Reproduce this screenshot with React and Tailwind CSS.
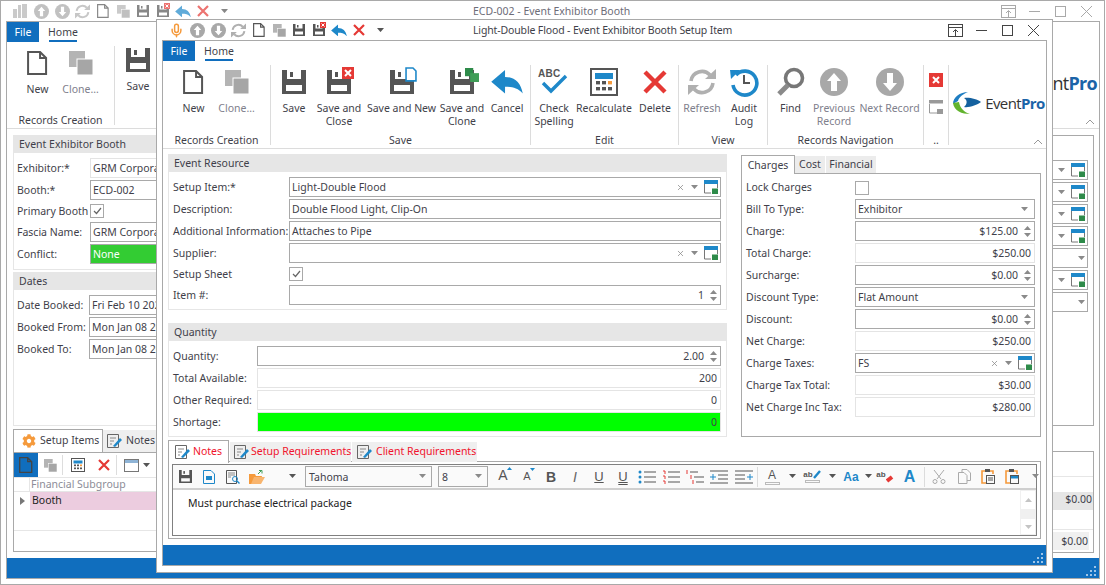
import React from "react";
import { Mic, X as XI } from "lucide-react";
import { FaCog } from "react-icons/fa";

const D = "#555555", B = "#1e88c9", R = "#e53935";

const Page = ({ s = 24, c = D }) => (
  <svg width={s * 0.84} height={s} viewBox="0 0 20 24"><path d="M1 1H13L19 7V23H1Z M13 1V7H19" fill="none" stroke={c} strokeWidth="2" /></svg>
);
const Clone = ({ s = 24 }) => (
  <svg width={s} height={s} viewBox="0 0 24 24"><rect x="0" y="0" width="16" height="16" fill="#b4b4b4" /><rect x="8" y="8" width="16" height="16" fill="#a6a6a6" stroke="#fff" strokeWidth="1" /></svg>
);
const Floppy = ({ s = 24 }) => (
  <svg width={s} height={s} viewBox="0 0 24 24"><path fillRule="evenodd" d="M0 0H24V24H0Z M5 0V9H19V0Z M4 15V21H20V15Z" fill={D} /><rect x="8" y="2" width="3" height="5" fill={D} /></svg>
);
const Badge = ({ s, kind }) => (
  <span className="relative inline-block">
    <Floppy s={s} />
    {kind === "x" && (
      <svg className="absolute left-[62%] top-[-14%]" width={s * 0.5} height={s * 0.5} viewBox="0 0 12 12"><rect width="12" height="12" fill={R} /><path d="M3 3L9 9M9 3L3 9" stroke="#fff" strokeWidth="2" /></svg>
    )}
    {kind === "new" && (
      <svg className="absolute left-[66%] top-[-14%]" width={s * 0.5} height={s * 0.62} viewBox="0 0 12 15"><path d="M1 1H8L11 4V14H1Z" fill="#fff" stroke={B} strokeWidth="1.6" /></svg>
    )}
    {kind === "clone" && (
      <svg className="absolute left-[62%] top-[-10%]" width={s * 0.6} height={s * 0.6} viewBox="0 0 14 14"><rect x="0" y="0" width="8" height="8" fill="#2e8b4a" /><rect x="5" y="5" width="9" height="9" fill="#3f9d57" /></svg>
    )}
  </span>
);
const Circ = ({ s = 28, up = true }) => (
  <svg width={s} height={s} viewBox="0 0 28 28"><circle cx="14" cy="14" r="14" fill="#a8a8a8" /><path d={up ? "M14 5L21 13H17V23H11V13H7Z" : "M14 23L21 15H17V5H11V15H7Z"} fill="#fff" /></svg>
);
const Refresh = ({ s = 28, c = "#b0b0b0" }) => (
  <svg width={s} height={s} viewBox="0 0 28 28" fill="none"><path d="M3 13A11 11 0 0 1 22 7" stroke={c} strokeWidth="3.6" /><path d="M25 15A11 11 0 0 1 6 21" stroke={c} strokeWidth="3.6" /><path d="M17 11H28V1Z" fill={c} /><path d="M11 17H0V27Z" fill={c} /></svg>
);
const Undo = ({ s = 32, c = B }) => (
  <svg width={s} height={s * 0.8} viewBox="0 0 32 26"><path d="M0 13L14 1V8C24 8 30 14 32 25C27 19 21 18 14 18V25Z" fill={c} /></svg>
);
const RedX = ({ s = 24 }) => (
  <svg width={s} height={s} viewBox="0 0 24 24"><path d="M2 2L22 22M22 2L2 22" stroke={R} strokeWidth="4.4" /></svg>
);
const Spell = () => (
  <span className="relative inline-block w-[32px] h-[30px]">
    <span className="absolute left-0 top-[-1px] text-[10px] font-bold text-[#555] font-['Liberation_Sans',sans-serif] tracking-[0.3px]">ABC</span>
    <svg className="absolute left-[3px] top-[7px]" width="27" height="20" viewBox="0 0 27 20"><path d="M2 9L10 17L25 2" fill="none" stroke={B} strokeWidth="3.4" /></svg>
  </span>
);
const Calc = ({ s = 28 }) => (
  <svg width={s} height={s} viewBox="0 0 28 28"><rect x="1" y="1" width="26" height="26" fill="#fff" stroke={D} strokeWidth="2" /><rect x="5" y="5" width="18" height="6" fill={B} />
    {[6, 12, 18].map((x) => <rect key={x} x={x} y="13" width="4" height="3.4" fill={x === 18 ? "#f59a3c" : D} />)}
    {[6, 12, 18].map((x) => <rect key={x} x={x} y="19" width="4" height="3.4" fill={D} />)}
  </svg>
);
const Audit = () => (
  <svg width="30" height="30" viewBox="0 0 30 30" fill="none"><path d="M7 8A12 12 0 1 1 4 18" stroke={B} strokeWidth="3.6" /><path d="M1 3L11 3L2 12Z" fill={B} /><path d="M15 8V16H21" stroke={D} strokeWidth="2" /></svg>
);
const Find = () => (
  <svg width="30" height="30" viewBox="0 0 30 30" fill="none"><circle cx="18" cy="11" r="8.5" stroke="#777" strokeWidth="3.6" /><path d="M12 18L3 27" stroke="#8a8a8a" strokeWidth="5" /></svg>
);
const Linked = () => (
  <svg className="shrink-0" width="14" height="14" viewBox="0 0 14 14"><path d="M.5 4V13H7" fill="none" stroke="#777" /><path d="M13.5 4V8" stroke="#777" /><rect width="14" height="4" fill={B} /><rect x="8" y="8.5" width="6" height="5.5" fill="#2e8b4a" /></svg>
);
const WinRestore = ({ c }) => (
  <svg width="15" height="13" viewBox="0 0 15 13" fill="none" stroke={c}><rect x=".5" y=".5" width="14" height="12" /><path d="M0 3.5H15M7.5 12V6M5 8L7.5 5.5L10 8" /></svg>
);
const Caret = ({ c = "#8a8a8a", s = 7 }) => (
  <svg className="shrink-0" width={s} height={s * 0.6} viewBox="0 0 7 4"><path d="M0 0H7L3.5 4Z" fill={c} /></svg>
);
const Spin = () => (
  <span className="flex flex-col gap-[3px] ml-[6px] mr-[1px] shrink-0 -mt-[2px]">
    <svg width="7" height="4" viewBox="0 0 7 4"><path d="M0 4H7L3.5 0Z" fill="#8a8a8a" /></svg>
    <svg width="7" height="4" viewBox="0 0 7 4"><path d="M0 0H7L3.5 4Z" fill="#8a8a8a" /></svg>
  </span>
);
const Check = ({ on, shift }) => (
  <span className={`w-[14px] h-[14px] border border-[#a9a9a9] bg-white flex items-center justify-center shrink-0 ${shift ? "mt-[2px]" : ""}`}>
    {on && <svg width="9" height="8" viewBox="0 0 9 8"><path d="M1 4L3.5 6.5L8 1" fill="none" stroke="#666" strokeWidth="1.2" /></svg>}
  </span>
);
const DocEdit = () => (
  <svg className="shrink-0" width="15" height="14" viewBox="0 0 15 14" fill="none"><path d="M.5 .5H11.5V13.5H.5Z" stroke="#666" /><path d="M3 4H9M3 7H7M3 10H5" stroke="#888" /><path d="M6 12L13 4L15 6L8 13Z" fill={B} /></svg>
);
const Grip = () => (
  <svg width="12" height="12" viewBox="0 0 12 12" fill="#9fc5e8"><rect x="9" y="1" width="2" height="2" /><rect x="5" y="5" width="2" height="2" /><rect x="9" y="5" width="2" height="2" /><rect x="1" y="9" width="2" height="2" /><rect x="5" y="9" width="2" height="2" /><rect x="9" y="9" width="2" height="2" /></svg>
);
const Logo = () => (
  <span className="flex items-center shrink-0">
    <svg width="31" height="24" viewBox="0 0 31 24" fill="none">
      <path d="M1 13C1 6 8 1 16 1C11 3 7 6 6 10Z" fill="#1f7ec2" />
      <path d="M1 12C2 20 10 23 18 23C12 21 8 17 7 11Z" fill="#62b32e" />
      <path d="M12 7C17 6 25 8 29 11C25 14 17 17 12 16C15 14 16 9 12 7Z" fill="#14619f" />
    </svg>
    <span className="ml-[2px] text-[15px] leading-none tracking-[-0.6px] text-[#333] font-['Open_Sans',sans-serif]">Event<span className="font-bold text-[#1b64a8]">Pro</span></span>
  </span>
);

const RB = ({ w, icon, children, off }) => (
  <div className={`${w} flex flex-col items-center shrink-0`}>
    <div className="h-[32px] mt-[1px] flex items-center justify-center">{icon}</div>
    <div className={`mt-[4px] text-center leading-[13px] whitespace-pre ${off ? "text-[#80808c]" : "text-[#3f3f4a]"}`}>{children}</div>
  </div>
);
const Group = ({ w, label, children, noLine }) => (
  <div className={`${w} my-[3px] flex flex-col shrink-0 ${noLine ? "" : "border-r border-[#dcdcdc]"}`}>
    <div className="h-[68px] flex overflow-hidden">{children}</div>
    <div className="h-[12px] leading-[15px] text-center text-[#3f3f4a] whitespace-nowrap">{label}</div>
  </div>
);
const TabsRow = () => (
  <div className="h-[21px] flex shrink-0">
    <div className="w-[32px] h-[20px] bg-[#106ebe] text-white flex items-center justify-center pt-[2px]">File</div>
    <div className="ml-[10px] w-[28px] h-[20px] border-b-2 border-[#106ebe] flex items-center justify-center text-[#3f3f4a] pt-[3px]">Home</div>
  </div>
);
const Header = ({ children }) => (
  <div className="h-[18px] bg-[#e6e6e6] px-[5px] leading-[18px] text-[#3f3f4a] whitespace-nowrap">{children}</div>
);
const Row = ({ w, label, children, cls = "h-[20px]" }) => (
  <div className={`flex mb-[2px] items-center ${cls}`}>
    <div className={`${w} shrink-0 text-[#3f3f4a] whitespace-nowrap pt-[2px]`}>{label}</div>
    {children}
  </div>
);
const Inp = ({ children, ro, right, cls = "" }) => (
  <div className={`flex-1 min-w-0 h-[20px] border ${ro ? "border-[#e4e4e4]" : "border-[#a9a9a9]"} flex items-center px-[2px] pt-[2px] text-[#3f3f4a] whitespace-nowrap overflow-hidden ${right ? "justify-end" : "justify-between"} ${cls}`}>
    {children}
  </div>
);
const LookupEnd = ({ noX }) => (
  <span className="flex items-center gap-[6px] shrink-0 -mt-[2px]">
    {!noX && <XI size={9} color="#888" strokeWidth={2} />}
    <Caret />
    <Linked />
  </span>
);
const ComboEnd = () => <span className="pr-[4px] -mt-[2px] flex items-center"><Caret /></span>;

const Quick = ({ first }) => (
  <div className="flex items-center">
    <div className="w-[20px] flex justify-center">{first}</div>
    <div className="w-[22px] flex justify-center"><Circ s={15} /></div>
    <div className="w-[20px] flex justify-center"><Circ s={15} up={false} /></div>
    <div className="w-[21px] flex justify-center"><Refresh s={15} /></div>
    <div className="w-[20px] flex justify-center"><Page s={14} /></div>
    <div className="w-[20px] flex justify-center"><Clone s={13} /></div>
    <div className="w-[20px] flex justify-center"><Floppy s={12} /></div>
    <div className="w-[20px] flex justify-center"><Badge s={12} kind="x" /></div>
    <div className="w-[20px] flex justify-center"><Undo s={16} /></div>
    <div className="w-[20px] flex justify-center"><RedX s={12} /></div>
    <div className="w-[23px] flex justify-center"><Caret c="#555" /></div>
  </div>
);
const WinBtns = ({ c }) => (
  <div className="flex items-center absolute top-0 right-0 h-full">
    <div className="w-[26px] flex justify-center"><WinRestore c={c} /></div>
    <div className="w-[27px] flex justify-center"><svg width="11" height="1"><rect width="11" height="1" fill={c} /></svg></div>
    <div className="w-[25px] flex justify-center"><svg width="11" height="11" fill="none" stroke={c}><rect x=".5" y=".5" width="10" height="10" /></svg></div>
    <div className="w-[27px] flex justify-center"><svg width="11" height="11" stroke={c}><path d="M0 0L11 11M11 0L0 11" /></svg></div>
  </div>
);

const ToolBtn = ({ children, w = "w-[24px]" }) => <div className={`${w} shrink-0 flex justify-center items-center h-full`}>{children}</div>;
const Fmt = ({ children, cls = "" }) => <span className={`font-['Liberation_Sans',sans-serif] leading-none ${cls}`}>{children}</span>;
const Lines = ({ kind }) => (
  <svg width="18" height="14" viewBox="0 0 18 14" fill="none">
    {kind === "bul" && <><path d="M6 2H18M6 7H18M6 12H18" stroke="#555" /><circle cx="2" cy="2" r="1.5" fill={B} /><circle cx="2" cy="7" r="1.5" fill={B} /><circle cx="2" cy="12" r="1.5" fill={B} /></>}
    {kind === "num" && <><path d="M6 2H18M6 7H18M6 12H18" stroke="#555" /><path d="M1 1H3V4M1 6H3V9M1 11H3V14" stroke={R} /></>}
    {kind === "ml" && <><path d="M4 2H12M8 7H18M10 12H18" stroke="#555" /><path d="M1 0V4M5 5V9M7 10V14" stroke={R} /></>}
    {kind === "ind" && <><path d="M0 1H18M8 5H18M8 9H18M0 13H18" stroke="#555" /><path d="M0 7H6M3 4V10" stroke={B} /></>}
  </svg>
);

const Background = () => (
  <div className="w-[1105px] h-[585px] border border-[#a9a9a9] flex flex-col pl-[5px] pr-[4px] pb-[5px] bg-white">
    <div className="relative h-[20px] shrink-0 flex items-center">
      <div className="opacity-70 pl-[4px]"><Quick first={<svg width="14" height="14" viewBox="0 0 14 14" fill="#b5b5b5"><rect x="0" y="5" width="4" height="9" /><rect x="5" y="1" width="3" height="13" /><rect x="9" y="0" width="5" height="14" /></svg>} /></div>
      <div className="absolute left-[467px] top-0 h-full leading-[20px] text-[#6d6d78] whitespace-nowrap">ECD-002 - Event Exhibitor Booth</div>
      <div className="opacity-50"><WinBtns c="#555" /></div>
    </div>
    <div className="flex-1 min-h-0 border border-[#a9a9a9] flex flex-col">
      <TabsRow />
      <div className="h-[86px] shrink-0 flex border-b border-[#dcdcdc] relative">
        <Group w="w-[108px]" label="Records Creation">
          <div className="w-[9px]" />
          <RB w="w-[43px]" icon={<Page s={24} />}>New</RB>
          <RB w="w-[43px]" icon={<Clone />} off>Clone…</RB>
        </Group>
        <RB w="w-[46px]" icon={<Floppy />}>Save</RB>
        <div className="absolute right-[2px] top-[31px] text-[18px] leading-none tracking-[-0.7px] text-[#333] font-['Open_Sans',sans-serif]">nt<span className="font-bold text-[#1b64a8]">Pro</span></div>
        <div className="absolute right-[4px] bottom-[3px]"><svg width="10" height="6" fill="none" stroke="#999"><path d="M1 5L5 1L9 5" /></svg></div>
      </div>
      <div className="flex-1 min-h-0 flex justify-between pl-[6px] pr-[5px] pt-[6px]">
        <div className="w-[300px] flex flex-col">
          <div className="border border-t-0 border-[#e6e6e6] h-[135px]">
            <Header>Event Exhibitor Booth</Header>
            <div className="pl-[3px] pr-[5px] pt-[5px]">
              <Row w="w-[73px]" label="Exhibitor:*"><Inp ro>GRM Corporation</Inp></Row>
              <Row w="w-[73px]" label="Booth:*"><Inp>ECD-002</Inp></Row>
              <Row w="w-[73px]" label="Primary Booth" cls="h-[18px]"><Check on /></Row>
              <Row w="w-[73px]" label="Fascia Name:"><Inp>GRM Corporation</Inp></Row>
              <Row w="w-[73px]" label="Conflict:"><Inp cls="bg-[#33cc33] !text-white">None</Inp></Row>
            </div>
          </div>
          <div className="border border-t-0 border-[#e6e6e6] mt-[2px] h-[154px]">
            <Header>Dates</Header>
            <div className="pl-[3px] pr-[5px] pt-[5px]">
              <Row w="w-[72px]" label="Date Booked:"><Inp>Fri Feb 10 2023</Inp></Row>
              <Row w="w-[72px]" label="Booked From:"><Inp>Mon Jan 08 2024</Inp></Row>
              <Row w="w-[72px]" label="Booked To:"><Inp>Mon Jan 08 2024</Inp></Row>
            </div>
          </div>
          <div className="flex mt-[3px] h-[23px]">
            <div className="w-[90px] border border-b-0 border-[#a9a9a9] flex items-center gap-[4px] pl-[8px] text-[#3f3f4a] whitespace-nowrap"><FaCog size={14} color="#f59a3c" />Setup Items</div>
            <div className="w-[60px] mt-[1px] bg-[#efefef] flex items-center gap-[4px] pl-[4px] text-[#3f3f4a]"><DocEdit />Notes</div>
          </div>
          <div className="h-[100px] border border-[#a9a9a9] flex flex-col">
            <div className="h-[24px] flex items-center shrink-0">
              <div className="w-[24px] h-full bg-[#106ebe] flex items-center justify-center"><Page s={16} c="#444" /></div>
              <div className="w-[24px] flex justify-center"><Clone s={13} /></div>
              <div className="w-[1px] h-[20px] bg-[#ddd]" />
              <div className="w-[29px] flex justify-center"><Calc s={14} /></div>
              <div className="w-[24px] flex justify-center"><RedX s={12} /></div>
              <div className="w-[1px] h-[20px] bg-[#ddd]" />
              <div className="ml-[7px] flex items-center gap-[4px]"><svg width="15" height="13" fill="none"><rect x=".5" y=".5" width="14" height="12" stroke="#777" /><rect x="1" y="1" width="13" height="3" fill="#8fb4d6" /></svg><Caret c="#555" /></div>
            </div>
            <div className="h-[15px] border-y border-[#e6e6e6] flex shrink-0">
              <div className="w-[16px] border-r border-[#e6e6e6]" />
              <div className="pl-[1px] text-[#8d8d98] leading-[12px] whitespace-nowrap">Financial Subgroup</div>
            </div>
            <div className="h-[18px] flex shrink-0">
              <div className="w-[16px] flex items-center justify-center"><svg width="5" height="8"><path d="M0 0L5 4L0 8Z" fill="#777" /></svg></div>
              <div className="flex-1 bg-[#ecccdf] text-[#222] pl-[2px] leading-[16px]">Booth</div>
            </div>
            <div className="h-[21px] border-b border-[#e6e6e6]" />
          </div>
        </div>
        <div className="w-[100px] flex flex-col">
          <div className="h-[291px] border border-[#a9a9a9] pt-[24px] pr-[5px]">
            {[1, 1, 1, 1, 0, 1, 0].map((v, i) => (
              <div key={i} className="h-[20px] mb-[2px] border border-[#a9a9a9] border-l-0 flex items-center justify-end pr-[2px] gap-[6px]">
                <Caret />{v ? <Linked /> : null}
              </div>
            ))}
          </div>
          <div className="mt-[25px] h-[102px] border border-[#a9a9a9] flex flex-col">
            <div className="h-[25px] border-b border-[#e6e6e6]" />
            <div className="h-[15px]" />
            <div className="h-[18px] bg-[#e6e6e6] flex items-center justify-end pr-[1px] pb-[2px] text-[#3f3f4a]">$0.00</div>
            <div className="h-[20px] border-b border-[#e6e6e6]" />
            <div className="h-[18px] mt-[2px] mr-[4px] bg-[#f0f0f0] flex items-center justify-end pr-[1px] pt-[2px] text-[#3f3f4a]">$0.00</div>
          </div>
        </div>
      </div>
      <div className="h-[20px] bg-[#106ebe] shrink-0 flex justify-end items-end pr-[2px] pb-[1px]"><Grip /></div>
    </div>
  </div>
);

const Dialog = () => (
  <div className="absolute left-[156px] top-[19px] w-[897px] h-[554px] border border-[#a9a9a9] bg-white flex flex-col px-[5px] pb-[6px]">
    <div className="relative h-[20px] shrink-0 flex items-center">
      <div className="pl-[4px]"><Quick first={<Mic size={15} color="#f59a3c" strokeWidth={2.4} />} /></div>
      <div className="absolute left-[311px] top-0 h-full leading-[21px] tracking-[-0.14px] text-[#3f3f4a] whitespace-nowrap">Light-Double Flood - Event Exhibitor Booth Setup Item</div>
      <WinBtns c="#444" />
    </div>
    <div className="flex-1 min-h-0 border border-[#a9a9a9] flex flex-col">
      <TabsRow />
      <div className="h-[87px] shrink-0 flex border-b border-[#dcdcdc] relative">
        <Group w="w-[108px]" label="Records Creation">
          <div className="w-[9px]" />
          <RB w="w-[43px]" icon={<Page s={24} />}>New</RB>
          <RB w="w-[43px]" icon={<Clone />} off>Clone…</RB>
        </Group>
        <Group w="w-[260px]" label="Save">
          <div className="w-[6px]" />
          <RB w="w-[34px]" icon={<Floppy />}>Save</RB>
          <RB w="w-[56px]" icon={<Badge s={24} kind="x" />}>{"Save and\nClose"}</RB>
          <RB w="w-[69px]" icon={<Badge s={24} kind="new" />}>Save and New</RB>
          <RB w="w-[52px]" icon={<Badge s={24} kind="clone" />}>{"Save and\nClone"}</RB>
          <RB w="w-[38px]" icon={<Undo />}>Cancel</RB>
        </Group>
        <Group w="w-[148px]" label="Edit">
          <RB w="w-[46px]" icon={<Spell />}>{"Check\nSpelling"}</RB>
          <RB w="w-[54px]" icon={<Calc />}>Recalculate</RB>
          <RB w="w-[48px]" icon={<RedX />}>Delete</RB>
        </Group>
        <Group w="w-[89px]" label="View">
          <RB w="w-[46px]" icon={<Refresh />} off>Refresh</RB>
          <RB w="w-[38px]" icon={<Audit />}>{"Audit\nLog"}</RB>
        </Group>
        <Group w="w-[156px]" label="Records Navigation">
          <RB w="w-[45px]" icon={<Find />}>Find</RB>
          <RB w="w-[42px]" icon={<Circ />} off>{"Previous\nRecord"}</RB>
          <RB w="w-[69px]" icon={<Circ up={false} />} off>Next Record</RB>
        </Group>
        <Group w="w-[25px]" label="..">
          <div className="w-full flex flex-col items-center pt-[8px] gap-[13px]">
            <svg width="14" height="14" viewBox="0 0 14 14"><rect width="14" height="14" fill={R} /><path d="M4 4L10 10M10 4L4 10" stroke="#fff" strokeWidth="2" /></svg>
            <svg width="14" height="14" viewBox="0 0 14 14" fill="none"><path d="M.5 4V13H8" stroke="#999" /><rect width="14" height="3.5" fill="#999" /><rect x="8" y="9" width="6" height="5" fill="#999" /></svg>
          </div>
        </Group>
        <div className="flex-1 flex items-center justify-center pb-[4px] pl-[2px]"><Logo /></div>
        <div className="absolute right-[3px] bottom-[3px]"><svg width="10" height="6" fill="none" stroke="#999"><path d="M1 5L5 1L9 5" /></svg></div>
      </div>
      <div className="flex-1 min-h-0 px-[5px] pt-[5px] flex flex-col">
        <div className="flex justify-between h-[283px] shrink-0">
          <div className="w-[559px] flex flex-col">
            <div className="border border-t-0 border-[#e6e6e6] h-[156px]">
              <Header>Event Resource</Header>
              <div className="pl-[4px] pr-[5px] pt-[5px]">
                <Row w="w-[116px]" label="Setup Item:*"><Inp><span>Light-Double Flood</span><LookupEnd /></Inp></Row>
                <Row w="w-[116px]" label="Description:"><Inp>Double Flood Light, Clip-On</Inp></Row>
                <Row w="w-[116px]" label="Additional Information:"><Inp>Attaches to Pipe</Inp></Row>
                <Row w="w-[116px]" label="Supplier:"><Inp><span /><LookupEnd /></Inp></Row>
                <Row w="w-[116px]" label="Setup Sheet" cls="h-[18px]"><Check on /></Row>
                <Row w="w-[116px]" label="Item #:"><Inp right>1<Spin /></Inp></Row>
              </div>
            </div>
            <div className="border border-t-0 border-[#e6e6e6] mt-[13px] h-[114px]">
              <Header>Quantity</Header>
              <div className="pl-[4px] pr-[5px] pt-[5px]">
                <Row w="w-[84px]" label="Quantity:"><Inp right>2.00<Spin /></Inp></Row>
                <Row w="w-[84px]" label="Total Available:"><Inp right ro><span className="pr-[1px]">200</span></Inp></Row>
                <Row w="w-[84px]" label="Other Required:"><Inp right ro><span className="pr-[1px]">0</span></Inp></Row>
                <Row w="w-[84px]" label="Shortage:"><Inp right ro cls="bg-[#00ff00]"><span className="pr-[1px]">0</span></Inp></Row>
              </div>
            </div>
          </div>
          <div className="w-[300px] flex flex-col pt-[1px]">
            <div className="flex h-[19px] shrink-0 -mb-[1px] relative z-10">
              <div className="w-[54px] h-[19px] border border-b-0 border-[#a9a9a9] bg-white flex items-center justify-center pt-[2px] text-[#3f3f4a]">Charges</div>
              <div className="w-[30px] mt-[1px] h-[17px] bg-[#ececec] flex items-center justify-center pt-[1px] text-[#3f3f4a]">Cost</div>
              <div className="w-[50px] ml-[1px] mt-[1px] h-[17px] bg-[#ececec] flex items-center justify-center pt-[1px] text-[#3f3f4a]">Financial</div>
            </div>
            <div className="h-[265px] border border-[#a9a9a9] pl-[4px] pr-[5px] pt-[3px]">
              <Row w="w-[109px]" label="Lock Charges"><Check shift /></Row>
              <Row w="w-[109px]" label="Bill To Type:"><Inp><span>Exhibitor</span><ComboEnd /></Inp></Row>
              <Row w="w-[109px]" label="Charge:"><Inp right>$125.00<Spin /></Inp></Row>
              <Row w="w-[109px]" label="Total Charge:"><Inp right ro><span className="pr-[1px]">$250.00</span></Inp></Row>
              <Row w="w-[109px]" label="Surcharge:"><Inp right>$0.00<Spin /></Inp></Row>
              <Row w="w-[109px]" label="Discount Type:"><Inp><span>Flat Amount</span><ComboEnd /></Inp></Row>
              <Row w="w-[109px]" label="Discount:"><Inp right>$0.00<Spin /></Inp></Row>
              <Row w="w-[109px]" label="Net Charge:"><Inp right ro><span className="pr-[1px]">$250.00</span></Inp></Row>
              <Row w="w-[109px]" label="Charge Taxes:"><Inp><span>FS</span><LookupEnd /></Inp></Row>
              <Row w="w-[109px]" label="Charge Tax Total:"><Inp right ro><span className="pr-[1px]">$30.00</span></Inp></Row>
              <Row w="w-[109px]" label="Net Charge Inc Tax:"><Inp right ro><span className="pr-[1px]">$280.00</span></Inp></Row>
            </div>
          </div>
        </div>
        <div className="flex h-[22px] mt-[3px] shrink-0 relative z-10 -mb-[1px] text-[#f0142d]">
          <div className="w-[61px] h-[23px] border border-b-0 border-[#a9a9a9] bg-white flex items-center pl-[6px] gap-[3px]"><DocEdit />Notes</div>
          <div className="w-[121px] ml-[1px] mt-[2px] h-[20px] bg-[#efefef] flex items-center pl-[4px] gap-[2px] whitespace-nowrap"><DocEdit />Setup Requirements</div>
          <div className="w-[125px] ml-[1px] mt-[2px] h-[20px] bg-[#efefef] flex items-center pl-[5px] gap-[4px] whitespace-nowrap"><DocEdit />Client Requirements</div>
        </div>
        <div className="h-[78px] shrink-0 border border-[#a9a9a9] px-[3px] py-[2px]">
          <div className="h-full border border-[#808080] flex flex-col">
            <div className="h-[25px] shrink-0 bg-[#fafafa] border-b-2 border-[#cfcfcf] flex items-center">
              <ToolBtn><Floppy s={13} /></ToolBtn>
              <ToolBtn><svg width="12" height="14" viewBox="0 0 12 14" fill="none"><path d="M.5 .5H8L11.5 4V13.5H.5Z" stroke={B} /><rect x="3" y="6" width="6" height="4" fill={B} /></svg></ToolBtn>
              <ToolBtn><svg width="14" height="14" viewBox="0 0 14 14" fill="none"><path d="M.5 .5H10.5V13.5H.5Z" stroke="#555" /><path d="M2 3H9M2 5H9M2 7H5" stroke="#888" /><circle cx="9" cy="9" r="2.5" stroke={B} /><path d="M11 11L13.5 13.5" stroke={B} strokeWidth="1.4" /></svg></ToolBtn>
              <ToolBtn><svg width="16" height="14" viewBox="0 0 16 14"><path d="M0 4H6L7 6H13L11 14H0Z" fill="#f59a3c" /><path d="M2 14L5 7H16L12 14Z" fill="#f8b56f" /><path d="M9 4L12 1M10 .5H13V3.5" fill="none" stroke="#3f9d57" /></svg></ToolBtn>
              <div className="w-[36px] shrink-0 flex justify-end pr-[9px]"><Caret c="#555" /></div>
              <div className="w-[127px] h-[21px] border border-[#a9a9a9] shrink-0 flex items-center justify-between pl-[3px] pr-[5px] pt-[2px] text-[#3f3f4a]">Tahoma<span className="-mt-[2px] flex items-center"><Caret /></span></div>
              <div className="w-[50px] h-[21px] ml-[6px] border border-[#a9a9a9] shrink-0 flex items-center justify-between pl-[3px] pr-[5px] pt-[2px] text-[#3f3f4a]">8<span className="-mt-[2px] flex items-center"><Caret /></span></div>
              <div className="w-[3px] shrink-0" />
              <ToolBtn><span className="relative text-[#555]"><Fmt cls="text-[14px]">A</Fmt><span className="absolute -right-[4px] -top-[1px]"><svg width="5" height="3"><path d="M0 3H5L2.5 0Z" fill={B} /></svg></span></span></ToolBtn>
              <ToolBtn><span className="relative text-[#555]"><Fmt cls="text-[11px]">A</Fmt><span className="absolute -right-[4px] -top-[1px]"><svg width="5" height="3"><path d="M0 0H5L2.5 3Z" fill={B} /></svg></span></span></ToolBtn>
              <ToolBtn><Fmt cls="text-[14px] font-bold text-[#555]">B</Fmt></ToolBtn>
              <ToolBtn><Fmt cls="text-[14px] italic text-[#666]">I</Fmt></ToolBtn>
              <ToolBtn><Fmt cls="text-[13px] underline text-[#555]">U</Fmt></ToolBtn>
              <ToolBtn><Fmt cls="text-[13px] underline decoration-double text-[#555]">U</Fmt></ToolBtn>
              <ToolBtn><Lines kind="bul" /></ToolBtn>
              <ToolBtn><Lines kind="num" /></ToolBtn>
              <ToolBtn><Lines kind="ml" /></ToolBtn>
              <ToolBtn><Lines kind="ind" /></ToolBtn>
              <ToolBtn w="w-[26px]"><div className="scale-x-[-1]"><Lines kind="ind" /></div></ToolBtn>
              <div className="w-[1px] h-[20px] bg-[#dcdcdc] shrink-0" />
              <ToolBtn w="w-[28px]"><span className="flex flex-col items-center text-[#555]"><Fmt cls="text-[12px]">A</Fmt><span className="w-[15px] h-[3px] border border-[#bbb] mt-[1px]" /></span></ToolBtn>
              <ToolBtn w="w-[12px]"><Caret c="#555" /></ToolBtn>
              <ToolBtn w="w-[28px]"><span className="flex flex-col items-center"><span className="flex items-end"><Fmt cls="text-[8px] font-bold text-[#555]">ab</Fmt><svg width="8" height="9"><path d="M1 8L7 1" stroke={B} strokeWidth="2.4" /></svg></span><span className="w-[15px] h-[3px] border border-[#bbb] mt-[1px]" /></span></ToolBtn>
              <ToolBtn w="w-[12px]"><Caret c="#555" /></ToolBtn>
              <ToolBtn w="w-[26px]"><Fmt cls="text-[12px] font-bold text-[#1e88c9]">Aa</Fmt></ToolBtn>
              <ToolBtn w="w-[8px]"><Caret c="#555" /></ToolBtn>
              <ToolBtn w="w-[26px]"><span className="flex items-end"><Fmt cls="text-[8px] font-bold text-[#555] mb-[4px]">ab</Fmt><svg width="8" height="8"><path d="M1 6L6 2" stroke={R} strokeWidth="4" /></svg></span></ToolBtn>
              <ToolBtn w="w-[23px]"><Fmt cls="text-[16px] font-bold text-[#1e88c9]">A</Fmt></ToolBtn>
              <div className="w-[1px] h-[20px] bg-[#dcdcdc] shrink-0 ml-[3px]" />
              <ToolBtn w="w-[27px]"><svg width="14" height="14" viewBox="0 0 14 14" fill="none" stroke="#aaa"><path d="M2 0L9 9M12 0L5 9" /><circle cx="3" cy="11.5" r="2" /><circle cx="11" cy="11.5" r="2" /></svg></ToolBtn>
              <ToolBtn><svg width="13" height="15" viewBox="0 0 13 15" fill="none" stroke="#aaa"><path d="M4 3V.5H9L12.5 4V11.5H9" /><path d="M.5 3.5H6L9 6.5V14.5H.5Z" /></svg></ToolBtn>
              <ToolBtn><svg width="14" height="15" viewBox="0 0 14 15" fill="none"><path d="M4 2H1V14H5" stroke="#f59a3c" strokeWidth="1.6" /><path d="M9 2H12V5" stroke="#f59a3c" strokeWidth="1.6" /><rect x="4" y="0" width="5" height="3" fill="#555" /><rect x="5.5" y="6.5" width="8" height="8" stroke="#555" /><path d="M7 9H12M7 11H12" stroke="#555" /></svg></ToolBtn>
              <ToolBtn><svg width="14" height="15" viewBox="0 0 14 15" fill="none"><path d="M4 2H1V14H5" stroke="#f59a3c" strokeWidth="1.6" /><path d="M9 2H12V5" stroke="#f59a3c" strokeWidth="1.6" /><rect x="4" y="0" width="5" height="3" fill="#555" /><rect x="5.5" y="6.5" width="8" height="8" stroke="#555" /><rect x="6" y="7" width="7" height="2.5" fill={B} /></svg></ToolBtn>
              <ToolBtn w="w-[22px]"><Caret /></ToolBtn>
            </div>
            <div className="flex-1 min-h-0 flex">
              <div className="flex-1 pl-[15px] pt-[6px] text-[#222] leading-[14px]">Must purchase electrical package</div>
              <div className="w-[16px] bg-[#f0f0f0] flex flex-col justify-between p-[1px]">
                <div className="h-[18px] bg-white flex items-center justify-center"><svg width="7" height="4"><path d="M0 4H7L3.5 0Z" fill="#c4c4c4" /></svg></div>
                <div className="h-[15px] bg-white flex items-center justify-center"><svg width="7" height="4"><path d="M0 0H7L3.5 4Z" fill="#c4c4c4" /></svg></div>
              </div>
            </div>
          </div>
        </div>
      </div>
      <div className="h-[20px] bg-[#106ebe] shrink-0 flex justify-end items-end pr-[2px] pb-[1px]"><Grip /></div>
    </div>
  </div>
);

export default function App() {
  return (
    <div className="relative w-[1106px] h-[585px] overflow-hidden bg-white text-[10.5px] font-['Noto_Sans',sans-serif]">
      <Background />
      <Dialog />
    </div>
  );
}
